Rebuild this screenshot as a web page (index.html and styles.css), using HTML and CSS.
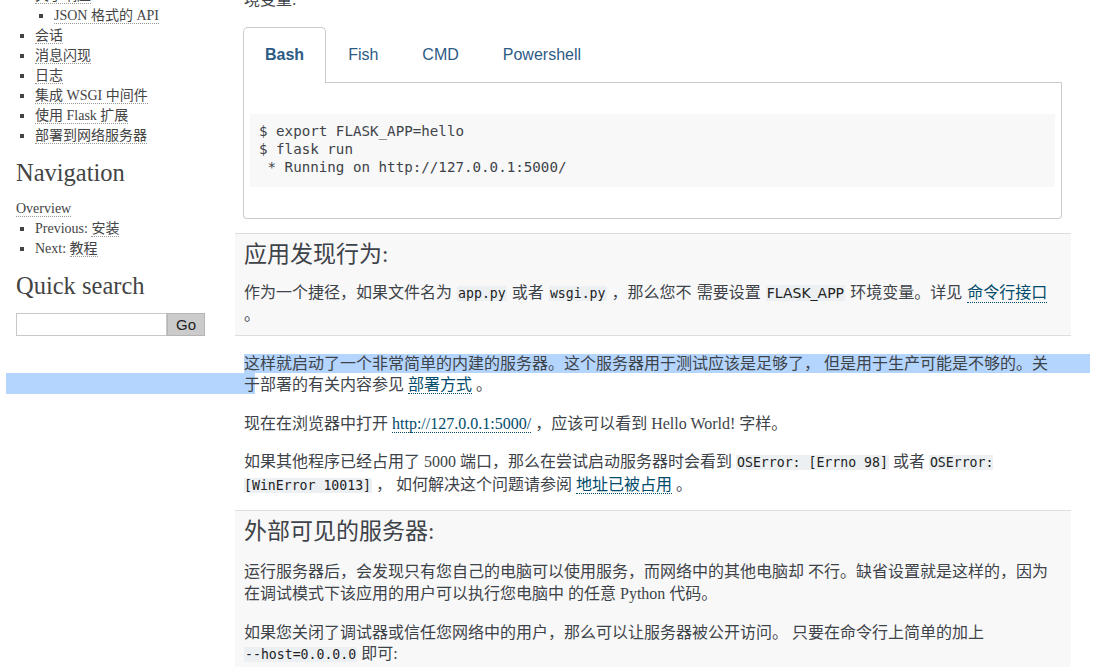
FILE: index.html
```html
<!DOCTYPE html>
<html lang="zh-CN">
<head>
<meta charset="utf-8">
<title>快速上手 — Flask 中文文档</title>
<link rel="stylesheet" href="styles.css">
</head>
<body>
<div class="page">
  <aside class="sidebar">
    <ul class="toc">
      <li><a href="#">关于响应</a>
        <ul><li><a href="#">JSON 格式的 API</a></li></ul>
      </li>
      <li><a href="#">会话</a></li>
      <li><a href="#">消息闪现</a></li>
      <li><a href="#">日志</a></li>
      <li><a href="#">集成 WSGI 中间件</a></li>
      <li><a href="#">使用 Flask 扩展</a></li>
      <li><a href="#">部署到网络服务器</a></li>
    </ul>
    <h3 class="side-title">Navigation</h3>
    <div class="overview"><a href="#">Overview</a></div>
    <ul class="navlist">
      <li>Previous: <a href="#">安装</a></li>
      <li>Next: <a href="#">教程</a></li>
    </ul>
    <h3 class="side-title">Quick search</h3>
    <form class="search">
      <input class="search-input" type="text">
      <button class="search-btn" type="button">Go</button>
    </form>
  </aside>

  <main class="main">
    <p class="lead">境变量:</p>

    <div class="tabs">
      <div class="tablist">
        <span class="tab active">Bash</span>
        <span class="tab">Fish</span>
        <span class="tab">CMD</span>
        <span class="tab">Powershell</span>
      </div>
      <div class="tabpanel">
<pre class="code">$ export FLASK_APP=hello
$ flask run
 * Running on http://127.0.0.1:5000/</pre>
      </div>
    </div>

    <section class="box box-sans">
      <h2 class="box-title">应用发现行为:</h2>
      <p class="box-text">作为一个捷径，如果文件名为 <code class="mono">app.py</code> 或者 <code class="mono">wsgi.py</code> ，那么您不 需要设置 <code class="sans-code">FLASK_APP</code> 环境变量。详见 <a href="#" class="link">命令行接口</a> 。</p>
    </section>

    <p class="para selected">这样就启动了一个非常简单的内建的服务器。这个服务器用于测试应该是足够了， 但是用于生产可能是不够的。关于部署的有关内容参见 <a href="#" class="link">部署方式</a> 。</p>

    <p class="para">现在在浏览器中打开 <a href="#" class="link">http://127.0.0.1:5000/</a> ，应该可以看到 Hello World! 字样。</p>

    <p class="para">如果其他程序已经占用了 5000 端口，那么在尝试启动服务器时会看到 <code class="mono">OSError: [Errno 98]</code> 或者 <code class="mono">OSError: [WinError 10013]</code> ， 如何解决这个问题请参阅 <a href="#" class="link">地址已被占用</a> 。</p>

    <section class="box box2">
      <h2 class="box-title">外部可见的服务器:</h2>
      <p class="box-text">运行服务器后，会发现只有您自己的电脑可以使用服务，而网络中的其他电脑却 不行。缺省设置就是这样的，因为在调试模式下该应用的用户可以执行您电脑中 的任意 Python 代码。</p>
      <p class="box-text next">如果您关闭了调试器或信任您网络中的用户，那么可以让服务器被公开访问。 只要在命令行上简单的加上 <code class="mono nowrap">--host=0.0.0.0</code> 即可:</p>
    </section>
  </main>
</div>
</body>
</html>
```

FILE: styles.css
```css
html {
  margin: 0;
  padding: 0;
  background: #fff;
}

body {
  margin: 0;
  padding: 0;
  font-family: "Liberation Serif", "Noto Sans CJK SC", serif;
  color: #3e4349;
  overflow: hidden;
}

.page {
  display: flex;
  align-items: flex-start;
}

/* ---------- sidebar ---------- */
.sidebar {
  flex: none;
  width: 219px;
  padding-left: 16px;
  font-size: 14px;
  line-height: 20px;
  color: #444;
}

.sidebar a {
  color: #444;
  text-decoration: none;
  border-bottom: 1px dotted #999;
}

.toc {
  margin: -14px 0 0;
  padding-left: 19px;
  list-style: square;
}

.toc ul {
  margin: 0;
  padding-left: 19px;
  list-style: square;
}

.side-title {
  margin: 12px 0 11px;
  font-size: 24.5px;
  line-height: 30px;
  font-weight: normal;
  color: #444;
}

.overview {
  line-height: 20px;
}

.navlist {
  margin: 0;
  padding-left: 19px;
  list-style: square;
}

.search {
  display: flex;
  margin: 0;
  margin-top: 12px;
  height: 23px;
}

.search-input {
  box-sizing: border-box;
  width: 151px;
  height: 23px;
  margin: 0;
  border: 1px solid #c8c8c8;
  background: #fff;
}

.search-btn {
  box-sizing: border-box;
  width: 38px;
  height: 23px;
  margin: 0;
  padding: 0;
  border: 1px solid #b5b5b5;
  background: #cbcbcb;
  font-family: "Liberation Sans", sans-serif;
  font-size: 15px;
  color: #222;
}

/* ---------- main ---------- */
.main {
  flex: none;
  width: 818px;
  padding: 0 9px;
  font-size: 16px;
  line-height: 21.5px;
}

.lead {
  margin: -11px 0 0;
}

.tabs {
  margin: 16px 0 0 -1px;
  width: 819px;
}

.tablist {
  display: flex;
  border-bottom: 1px solid #c9cccf;
}

.tab {
  height: 54px;
  line-height: 54px;
  padding: 0 21px;
  margin-bottom: -1px;
  border: 1px solid transparent;
  border-bottom: 0;
  font-family: "Liberation Sans", sans-serif;
  font-size: 16px;
  color: #2d5b86;
}

.tab.active {
  border-color: #c9cccf;
  border-radius: 5px 5px 0 0;
  background: #fff;
  font-weight: bold;
  height: 55px;
}

.tabpanel {
  border: 1px solid #c9cccf;
  border-top: 0;
  border-radius: 0 0 4px 4px;
  padding: 31px 6px 31px;
}

.code {
  margin: 0;
  padding: 8px 9px 11px;
  background: #f8f8f8;
  font-family: "DejaVu Sans Mono", monospace;
  font-size: 14.2px;
  line-height: 18px;
  color: #3e4349;
}

.box {
  margin: 14px -9px 0;
  padding: 6px 9px 9px;
  background: #f8f8f8;
  border-top: 1px solid #dddddd;
  border-bottom: 1px solid #dddddd;
}

.box-sans {
  font-family: "DejaVu Sans", "Noto Sans CJK SC", sans-serif;
}

.box-title {
  margin: 0;
  font-size: 23px;
  line-height: 30px;
  font-weight: normal;
  font-family: "Liberation Serif", "Noto Sans CJK SC", serif;
  color: #3e4349;
}

.box-text {
  margin: 12px 0 0;
}

.box2 {
  margin-top: 14px;
}

.box2 .box-text {
  margin-top: 14px;
}

.box2 .box-text.next {
  margin-top: 17.5px;
}

.para {
  margin: 17px 0 0;
}

.selected {
  position: relative;
  z-index: 0;
}

.selected::before,
.selected::after {
  content: "";
  position: absolute;
  background: #b4d5fe;
  z-index: -1;
}

.selected::before {
  left: 0;
  top: 1px;
  width: 846px;
  height: 19px;
}

.selected::after {
  left: -238px;
  top: 20px;
  width: 249px;
  height: 21px;
}

.link {
  color: #004b6b;
  text-decoration: none;
  border-bottom: 1px dotted #004b6b;
}

.mono {
  font-family: "DejaVu Sans Mono", monospace;
  font-size: 13.2px;
  background: #ecf0f3;
  padding: 0 1px;
  color: #222;
}

.nowrap {
  white-space: nowrap;
}

.sans-code {
  font-family: "DejaVu Sans", sans-serif;
  font-size: 14px;
  background: #ecf0f3;
  padding: 0 1px;
  color: #222;
}
```
